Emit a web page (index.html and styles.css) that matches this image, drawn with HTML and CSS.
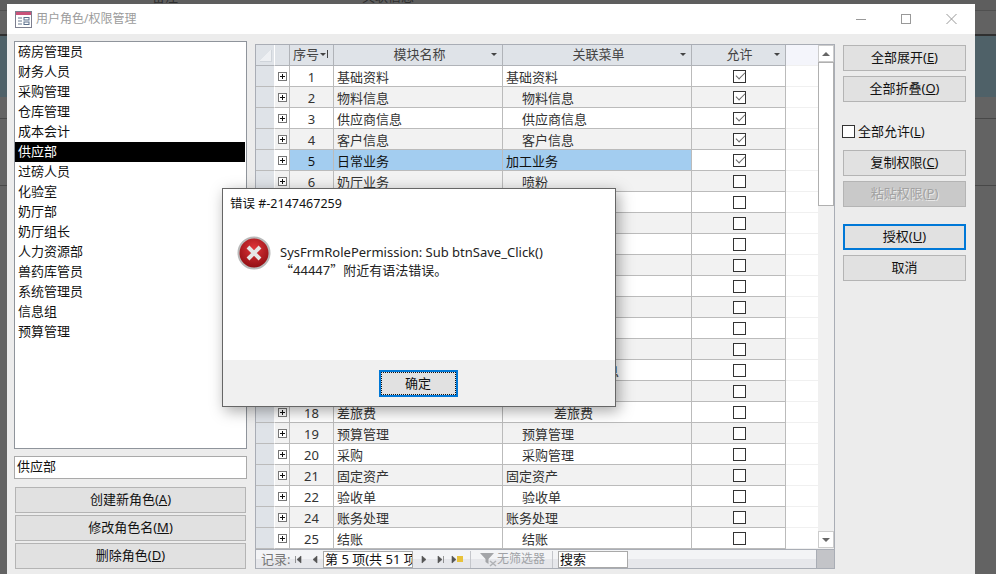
FILE: index.html
```html
<!DOCTYPE html>
<html lang="zh-CN">

<head>
  <meta charset="UTF-8">
  <meta name="viewport" content="width=device-width, initial-scale=1.0">
  <title>用户角色/权限管理</title>

  <link rel="stylesheet" href="styles.css">
</head>

<body>
  <!-- 后面主窗口露出来的一点文字 -->
  <div class="behind">
    <span class="behind-a">关联信息</span>
    <span class="behind-b">备注</span>
  </div>

  <div class="window">
    <div class="titlebar">
      <svg class="title-icon" width="17" height="17" viewBox="0 0 17 17">
        <rect x="0.5" y="0.5" width="16" height="16" fill="#fff" stroke="#7d7f8f" />
        <rect x="1" y="1" width="15" height="3" fill="#c9527a" />
        <path d="M3 7h4M3 10h4M3 13h4" stroke="#6b7a90" stroke-width="1" />
        <rect x="9" y="6.5" width="5" height="2.5" fill="#fff" stroke="#5a6f8c" />
        <rect x="9" y="11" width="5" height="2.5" fill="#fff" stroke="#5a6f8c" />
      </svg>
      <span class="title-text">用户角色/权限管理</span>
      <svg class="win-btns" width="110" height="12" viewBox="0 0 110 12">
        <path d="M0 6.5h10" stroke="#999" />
        <rect x="45.5" y="1.5" width="9" height="9" fill="none" stroke="#999" />
        <path d="M90.5 1l10 10M100.5 1l-10 10" stroke="#999" />
      </svg>
    </div>

    <div class="main">
      <div class="left">
        <ul class="rolelist">
          <li>磅房管理员</li>
          <li>财务人员</li>
          <li>采购管理</li>
          <li>仓库管理</li>
          <li>成本会计</li>
          <li class="selected">供应部</li>
          <li>过磅人员</li>
          <li>化验室</li>
          <li>奶厅部</li>
          <li>奶厅组长</li>
          <li>人力资源部</li>
          <li>兽药库管员</li>
          <li>系统管理员</li>
          <li>信息组</li>
          <li>预算管理</li>
        </ul>
        <div class="rolename">供应部</div>
        <div class="role-btns">
          <button class="btn">创建新角色(<u>A</u>)</button>
          <button class="btn">修改角色名(<u>M</u>)</button>
          <button class="btn">删除角色(<u>D</u>)</button>
        </div>
      </div>

      <div class="sheet">
        <div class="sheet-top">
          <div class="grid">
            <div class="row head">
              <span class="sel corner"></span>
              <span class="exp"></span>
              <span class="num">序号<i class="sort"></i></span>
              <span class="name">模块名称<i class="drop"></i></span>
              <span class="menu">关联菜单<i class="drop"></i></span>
              <span class="allow">允许<i class="drop"></i></span>
              <span class="rest"></span>
            </div>
            <div class="row"><span class="sel"></span><span class="exp"><i class="plus"></i></span><span class="num">1</span><span class="name">基础资料</span><span class="menu">基础资料</span><span class="allow"><i class="chk on"></i></span><span class="rest"></span></div>
            <div class="row"><span class="sel"></span><span class="exp"><i class="plus"></i></span><span class="num">2</span><span class="name">物料信息</span><span class="menu lv1">物料信息</span><span class="allow"><i class="chk on"></i></span><span class="rest"></span></div>
            <div class="row"><span class="sel"></span><span class="exp"><i class="plus"></i></span><span class="num">3</span><span class="name">供应商信息</span><span class="menu lv1">供应商信息</span><span class="allow"><i class="chk on"></i></span><span class="rest"></span></div>
            <div class="row"><span class="sel"></span><span class="exp"><i class="plus"></i></span><span class="num">4</span><span class="name">客户信息</span><span class="menu lv1">客户信息</span><span class="allow"><i class="chk on"></i></span><span class="rest"></span></div>
            <div class="row current"><span class="sel"></span><span class="exp"><i class="plus"></i></span><span class="num">5</span><span class="name">日常业务</span><span class="menu">加工业务</span><span class="allow"><i class="chk on"></i></span><span class="rest"></span></div>
            <div class="row"><span class="sel"></span><span class="exp"><i class="plus"></i></span><span class="num">6</span><span class="name">奶厅业务</span><span class="menu lv1">喷粉</span><span class="allow"><i class="chk"></i></span><span class="rest"></span></div>
            <div class="row"><span class="sel"></span><span class="exp"><i class="plus"></i></span><span class="num">7</span><span class="name"></span><span class="menu"></span><span class="allow"><i class="chk"></i></span><span class="rest"></span></div>
            <div class="row"><span class="sel"></span><span class="exp"><i class="plus"></i></span><span class="num">8</span><span class="name"></span><span class="menu"></span><span class="allow"><i class="chk"></i></span><span class="rest"></span></div>
            <div class="row"><span class="sel"></span><span class="exp"><i class="plus"></i></span><span class="num">9</span><span class="name"></span><span class="menu"></span><span class="allow"><i class="chk"></i></span><span class="rest"></span></div>
            <div class="row"><span class="sel"></span><span class="exp"><i class="plus"></i></span><span class="num">10</span><span class="name"></span><span class="menu"></span><span class="allow"><i class="chk"></i></span><span class="rest"></span></div>
            <div class="row"><span class="sel"></span><span class="exp"><i class="plus"></i></span><span class="num">11</span><span class="name"></span><span class="menu"></span><span class="allow"><i class="chk"></i></span><span class="rest"></span></div>
            <div class="row"><span class="sel"></span><span class="exp"><i class="plus"></i></span><span class="num">12</span><span class="name"></span><span class="menu"></span><span class="allow"><i class="chk"></i></span><span class="rest"></span></div>
            <div class="row"><span class="sel"></span><span class="exp"><i class="plus"></i></span><span class="num">13</span><span class="name"></span><span class="menu"></span><span class="allow"><i class="chk"></i></span><span class="rest"></span></div>
            <div class="row"><span class="sel"></span><span class="exp"><i class="plus"></i></span><span class="num">14</span><span class="name"></span><span class="menu"></span><span class="allow"><i class="chk"></i></span><span class="rest"></span></div>
            <div class="row"><span class="sel"></span><span class="exp"><i class="plus"></i></span><span class="num">15</span><span class="name"></span><span class="menu lv3">差旅费信息</span><span class="allow"><i class="chk"></i></span><span class="rest"></span></div>
            <div class="row"><span class="sel"></span><span class="exp"><i class="plus"></i></span><span class="num">16</span><span class="name"></span><span class="menu"></span><span class="allow"><i class="chk"></i></span><span class="rest"></span></div>
            <div class="row"><span class="sel"></span><span class="exp"><i class="plus"></i></span><span class="num">18</span><span class="name">差旅费</span><span class="menu lv3">差旅费</span><span class="allow"><i class="chk"></i></span><span class="rest"></span></div>
            <div class="row"><span class="sel"></span><span class="exp"><i class="plus"></i></span><span class="num">19</span><span class="name">预算管理</span><span class="menu lv1">预算管理</span><span class="allow"><i class="chk"></i></span><span class="rest"></span></div>
            <div class="row"><span class="sel"></span><span class="exp"><i class="plus"></i></span><span class="num">20</span><span class="name">采购</span><span class="menu lv1">采购管理</span><span class="allow"><i class="chk"></i></span><span class="rest"></span></div>
            <div class="row"><span class="sel"></span><span class="exp"><i class="plus"></i></span><span class="num">21</span><span class="name">固定资产</span><span class="menu">固定资产</span><span class="allow"><i class="chk"></i></span><span class="rest"></span></div>
            <div class="row"><span class="sel"></span><span class="exp"><i class="plus"></i></span><span class="num">22</span><span class="name">验收单</span><span class="menu lv1">验收单</span><span class="allow"><i class="chk"></i></span><span class="rest"></span></div>
            <div class="row"><span class="sel"></span><span class="exp"><i class="plus"></i></span><span class="num">24</span><span class="name">账务处理</span><span class="menu">账务处理</span><span class="allow"><i class="chk"></i></span><span class="rest"></span></div>
            <div class="row"><span class="sel"></span><span class="exp"><i class="plus"></i></span><span class="num">25</span><span class="name">结账</span><span class="menu lv1">结账</span><span class="allow"><i class="chk"></i></span><span class="rest"></span></div>
          </div>

          <div class="vscroll">
            <div class="sb-btn"><i class="tri-up"></i></div>
            <div class="sb-thumb"></div>
            <div class="sb-btn sb-down"><i class="tri-down"></i></div>
          </div>
        </div>

        <div class="sheet-bottom">
          <div class="nav">
            <span class="nav-label">记录:</span>
            <svg class="nav-icons" width="33" height="9" viewBox="0 0 33 9">
              <path d="M5.500 1v7M11 1v7L7 4.500zM27 1v7l-4-3.500z" fill="#555" stroke="#555" stroke-width="0.6" />
            </svg>
            <span class="nav-input">第 5 项(共 51 项</span>
            <svg class="nav-icons" width="50" height="9" viewBox="0 0 50 9">
              <path d="M9 1v7l4-3.500zM25 1v7l4-3.500zM30.500 1v7M39 1v7l4-3.500z" fill="#555" stroke="#555" stroke-width="0.6" />
              <rect x="44" y="1" width="6" height="6" fill="#e8c23a" />
            </svg>
            <span class="nav-sep"></span>
            <svg class="filter-icon" width="17" height="15" viewBox="0 0 17 15">
              <path d="M0 1h14L8.500 7v5L5.500 10V7z" fill="#a3a5a8" />
              <path d="M10 9l6 5M16 9l-6 5" stroke="#b0b2b5" stroke-width="1.500" />
            </svg>
            <span class="nofilter">无筛选器</span>
            <span class="nav-sep"></span>
            <span class="search">搜索</span>
          </div>
          <div class="grip"></div>
        </div>
      </div>

      <div class="right">
        <button class="btn">全部展开(<u>E</u>)</button>
        <button class="btn">全部折叠(<u>O</u>)</button>
        <label class="allow-all"><i class="chk"></i>全部允许(<u>L</u>)</label>
        <button class="btn">复制权限(<u>C</u>)</button>
        <button class="btn disabled">粘贴权限(<u>P</u>)</button>
        <button class="btn focus">授权(<u>U</u>)</button>
        <button class="btn">取消</button>
      </div>
    </div>
  </div>

  <div class="dialog">
    <div class="dialog-body">
      <div class="dialog-title">错误 #-2147467259</div>
      <div class="dialog-msg">
        <svg class="err-icon" width="34" height="34" viewBox="0 0 34 34">
          <defs>
            <radialGradient id="errfill" cx="50%" cy="35%" r="65%">
              <stop offset="0" stop-color="#e0353a" />
              <stop offset="1" stop-color="#8f0d12" />
            </radialGradient>
          </defs>
          <circle cx="17" cy="17" r="15.500" fill="url(#errfill)" stroke="#b9b9b9" stroke-width="2" />
          <path d="M11 11l12 12M23 11L11 23" stroke="#e6e6e6" stroke-width="4" />
        </svg>
        <div class="msg-text">
          <div>SysFrmRolePermission: Sub btnSave_Click()</div>
          <div><span class="cjk">“</span>44447<span class="cjk">”</span>附近有语法错误。</div>
        </div>
      </div>
    </div>
    <div class="dialog-foot">
      <button class="ok-btn">确定</button>
    </div>
  </div>
</body>

</html>
```

FILE: styles.css
```css
* {
  margin: 0;
  padding: 0;
  list-style: none;
  box-sizing: border-box;
}

html,
body {
  height: 574px;
  overflow: hidden;
}

body {
  position: relative;
  font: 13px/1 "Noto Sans", "Noto Sans CJK SC", sans-serif;
  color: #111;
  /* 对话框后面被遮暗的主窗口 */
  background: linear-gradient(to bottom,
      #5e5e5e 0 10px, #505050 10px 11px, #626262 11px 34px, #303030 34px 36px,
      #4f6168 36px 97px, #636363 97px 118px, #484848 118px 119px,
      #636363 119px 185px, #484848 185px 186px, #636363 186px);
}

.behind {
  height: 4px;
  overflow: hidden;
  position: relative;
  color: #2e2e2e;
}

.behind span {
  position: absolute;
  top: -10px;
}

.behind-a {
  left: 362px;
}

.behind-b {
  left: 152px;
}

.window {
  position: absolute;
  left: 7px;
  top: 4px;
  width: 968px;
  height: 580px;
  background: #ececec;
}

.titlebar {
  height: 30px;
  background: #fff;
  display: flex;
  align-items: center;
  padding: 0 9px 0 8px;
}

.title-text {
  margin-left: 4px;
  color: #9c9c9c;
  font-size: 12px;
}

.win-btns {
  margin-left: auto;
}

.main {
  display: flex;
  align-items: flex-start;
  padding: 7px 9px 0 7px;
}

/* 左边角色列表 */
.left {
  width: 233px;
}

.rolelist {
  height: 408px;
  background: #fff;
  border: 1px solid #8f949b;
}

.rolelist li {
  height: 20px;
  line-height: 19px;
  padding-left: 3px;
  margin-right: 1px;
}

.rolelist .selected {
  background: #000;
  color: #fff;
}

.rolename {
  height: 23px;
  line-height: 19px;
  margin-top: 7px;
  padding-left: 2px;
  background: #fff;
  border: 1px solid #a9a9a9;
}

.role-btns {
  margin: 8px 1px 0;
  display: flex;
  flex-direction: column;
  gap: 2px;
}

.btn {
  height: 26px;
  width: 100%;
  font: inherit;
  color: #111;
  background: #e1e1e1;
  border: 1px solid #b4b4b4;
  padding-bottom: 2px;
}

.btn.disabled {
  background: #c9c9c9;
  color: #a2a2a2;
  text-shadow: 1px 1px 0 #e8e8e8;
}

.btn.focus {
  border: 2px solid #0078d7;
}

/* 中间数据表 */
.sheet {
  width: 580px;
  height: 525px;
  margin: 3px 8px 0;
  border: 1px solid #a9adb5;
  background: #fff;
  display: flex;
  flex-direction: column;
}

.sheet-top {
  flex: 1;
  min-height: 0;
  display: flex;
}

.grid {
  width: 562px;
  overflow: hidden;
}

.row {
  display: flex;
  height: 21px;
  line-height: 22px;
  color: #333;
}

.row:nth-child(odd) {
  background: #f2f2f2;
}

.row span {
  flex: none;
  height: 21px;
  border-right: 1px solid #bbb;
  border-bottom: 1px solid #bbb;
  position: relative;
  white-space: nowrap;
}

.sel {
  width: 19px;
  background: #dfe3e8;
  border-right-color: #fff !important;
}

.exp {
  width: 15px;
}

.num {
  width: 44px;
  text-align: center;
}

.name {
  width: 169px;
  padding-left: 3px;
}

.menu {
  width: 189px;
  padding-left: 3px;
}

.menu.lv1 {
  padding-left: 19px;
}

.menu.lv3 {
  padding-left: 51px;
}

.allow {
  width: 94px;
  text-align: center;
  padding-left: 2px;
}

.row .rest {
  width: 32px;
  background: #fff;
  border-right: 0;
  border-bottom-color: #f0f0f0;
}

.row.head {
  background: #dfe3e8;
  color: #444;
  line-height: 19px;
}

.head span {
  border-color: #b0b3b8;
  text-align: center;
}

.head .num {
  text-align: left;
  padding-left: 3px;
}

.head .rest {
  background: #f4f5fb;
}

.corner::after {
  content: "";
  position: absolute;
  left: 4px;
  top: 5px;
  width: 11px;
  height: 11px;
  background: linear-gradient(135deg, transparent 50%, #eef0f3 50%);
  border-right: 1px solid #cfd4da;
  border-bottom: 1px solid #cfd4da;
}

.sort,
.drop {
  position: absolute;
  right: 5px;
  top: 8px;
  border: 3px solid transparent;
  border-top: 3px solid #444;
  border-bottom: 0;
}

.sort {
  right: 7px;
}

.sort::after {
  content: "";
  position: absolute;
  left: 4px;
  top: -6px;
  width: 1px;
  height: 8px;
  background: #444;
}

.row.current {
  background: #a3cdf0;
  color: #111;
}

.row.current .exp,
.row.current .allow {
  background: #fff;
}

.plus {
  position: absolute;
  left: 3px;
  top: 6px;
  width: 9px;
  height: 9px;
  border: 1px solid #777;
  background:
    linear-gradient(#111, #111) center / 5px 1px no-repeat,
    linear-gradient(#111, #111) center / 1px 5px no-repeat,
    #fff;
}

.chk {
  display: inline-block;
  position: relative;
  width: 13px;
  height: 13px;
  border: 1px solid #333;
  background: #fff;
  vertical-align: top;
  margin-top: 4px;
}

.chk.on::after {
  content: "";
  position: absolute;
  left: 2px;
  top: 1px;
  width: 8px;
  height: 4px;
  border-left: 1.5px solid #666;
  border-bottom: 1.5px solid #666;
  transform: rotate(-45deg);
}

.vscroll {
  width: 16px;
  background: #f0f0f0;
  display: flex;
  flex-direction: column;
}

.sb-btn {
  height: 17px;
  background: #fff;
  border: 1px solid #ccc;
  display: flex;
  align-items: center;
  justify-content: center;
  flex: none;
}

.sb-down {
  margin-top: auto;
  margin-bottom: 1px;
}

.tri-up,
.tri-down {
  border: 4px solid transparent;
}

.tri-up {
  border-bottom: 4px solid #666;
  border-top: 0;
}

.tri-down {
  border-top: 4px solid #666;
  border-bottom: 0;
}

.sb-thumb {
  height: 144px;
  background: #fff;
  border: 1px solid #b0b0b0;
}

.sheet-bottom {
  height: 19px;
  display: flex;
}

.nav {
  width: 560px;
  display: flex;
  align-items: center;
  border-top: 1px solid #a9adb5;
  background: linear-gradient(to bottom, #f3f4f6 0 50%, #e6e7eb 50%);
  color: #777;
  padding-left: 5px;
  white-space: nowrap;
}

.nav-label {
  width: 29px;
}

.nav-input {
  width: 90px;
  height: 17px;
  line-height: 14px;
  background: #fff;
  border: 1px solid #a9a9a9;
  color: #111;
  padding-left: 1px;
  overflow: hidden;
}

.nav-sep {
  width: 1px;
  height: 17px;
  background: #c4c6cb;
  margin-left: 7px;
}

.filter-icon {
  margin-left: 9px;
}

.nofilter {
  color: #a0a2a6;
  font-size: 12px;
}

.search {
  width: 70px;
  height: 17px;
  line-height: 14px;
  margin-left: 5px;
  background: #fff;
  border: 1px solid #a9a9a9;
  color: #111;
  padding-left: 1px;
}

.grip {
  flex: 1;
  background: #c3c4c8;
  border-top: 1px solid #a9adb5;
  border-left: 1px solid #a9adb5;
}

/* 右边按钮 */
.right {
  width: 123px;
  margin-top: 4px;
  display: flex;
  flex-direction: column;
  gap: 5px;
  flex: none;
}

.allow-all {
  display: flex;
  align-items: flex-start;
  height: 14px;
  line-height: 12px;
  margin: 18px 0 6px -1px;
}

.allow-all .chk {
  margin: 0 3px 0 0;
}

.btn.disabled {
  margin-bottom: 12px;
}

/* 错误对话框 */
.dialog {
  position: absolute;
  left: 222px;
  top: 188px;
  width: 394px;
  height: 219px;
  background: #fff;
  border: 1px solid #666;
  box-shadow: 3px 4px 14px rgba(0, 0, 0, 0.35);
  display: flex;
  flex-direction: column;
}

.dialog-body {
  flex: 1;
  padding: 8px 7px 0;
}

.dialog-title {
  height: 14px;
  line-height: 14px;
  font-size: 12.5px;
}

.dialog-msg {
  display: flex;
  margin-top: 25px;
  padding-left: 7px;
}

.err-icon {
  flex: none;
}

.msg-text {
  margin: 7px 0 0 9px;
  font-size: 13px;
  line-height: 18px;
  color: #222;
}

.cjk {
  font-family: "Noto Sans CJK SC", sans-serif;
}

.dialog-foot {
  height: 46px;
  background: #f0f0f0;
  display: flex;
  justify-content: center;
  align-items: center;
  padding-right: 2px;
}

.ok-btn {
  width: 79px;
  height: 27px;
  font: inherit;
  color: #111;
  background: #e1e1e1;
  border: 2px solid #0078d7;
  outline: 1px dotted #111;
  outline-offset: -3px;
}
```
